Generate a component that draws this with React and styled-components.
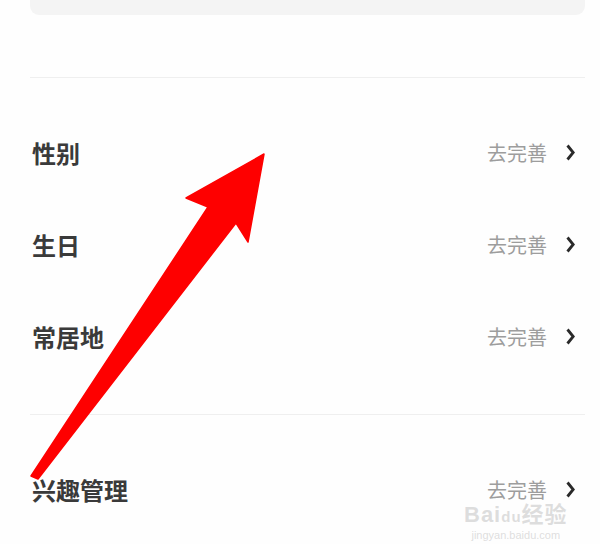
import React from 'react';
import styled, { createGlobalStyle } from 'styled-components';

// 页面的基础样式
const GlobalStyle = createGlobalStyle`
    body {
        margin: 0;
        background: #fefefe;
        font-family: "Noto Sans CJK SC", "Noto Sans", sans-serif;
    }
`;

const groups = [
    ['性别', '生日', '常居地'],
    ['兴趣管理'],
];

const Chevron = () => (
    <svg width="9" height="17" viewBox="0 0 9 17">
        <polyline points="1.5,1.5 7.2,8.5 1.5,15.5" fill="none" stroke="#2a2a2a" strokeWidth="2.8" />
    </svg>
);

const App = () => {
    return (
        <Page>
            <GlobalStyle />
            <TopCard />
            {groups.map((group, i) => (
                <Section key={i} last={i === groups.length - 1}>
                    {group.map((label) => (
                        <Row key={label}>
                            <Label>{label}</Label>
                            <Action>
                                <Hint>去完善</Hint>
                                <Chevron />
                            </Action>
                        </Row>
                    ))}
                </Section>
            ))}

            {/* 截图上画的红色箭头 */}
            <Arrow viewBox="0 0 600 544" width="600" height="544">
                <polygon
                    points="31,476 208,207 186,198 264,154 248,242 236,223 38,479"
                    fill="#fe0000"
                    stroke="#fe0000"
                    strokeWidth="1.5"
                    strokeLinejoin="round"
                />
            </Arrow>

            <Watermark>
                <Brand>Bai<Paw>du</Paw>经验</Brand>
                <Site>jingyan.baidu.com</Site>
            </Watermark>
        </Page>
    );
};

const Page = styled.div`
    position: relative;
    width: 600px;
    height: 544px;
    overflow: hidden;
    padding: 0 15px 0 30px;
    box-sizing: border-box;
`;

const TopCard = styled.div`
    height: 15px;
    background: #f4f4f4;
    border-radius: 0 0 9px 9px;
    margin-bottom: 62px;
`;

const Section = styled.div`
    border-top: 1px solid #efefef;
    padding: 31px 0 ${(p) => (p.last ? '31px' : '29px')};
`;

const Row = styled.div`
    height: 92px;
    box-sizing: border-box;
    padding: 0 10px 6px 2px;
    display: flex;
    align-items: center;
    justify-content: space-between;
`;

const Label = styled.span`
    font-size: 24px;
    font-weight: 700;
    color: #3a3a3a;
`;

const Action = styled.div`
    display: flex;
    align-items: center;
    gap: 19px;
`;

const Hint = styled.span`
    font-size: 20px;
    color: #9d9d9d;
`;

const Arrow = styled.svg`
    position: absolute;
    left: 0;
    top: 0;
    pointer-events: none;
`;

const Watermark = styled.div`
    position: absolute;
    left: 464px;
    top: 504px;
    display: flex;
    flex-direction: column;
    align-items: center;
    color: rgba(200, 200, 200, 0.6);
    font-family: "Liberation Sans", "Noto Sans CJK SC", sans-serif;
    line-height: 1;
    pointer-events: none;
`;

const Brand = styled.div`
    font-size: 22px;
    font-weight: 700;
    letter-spacing: 1px;
`;

const Paw = styled.span`
    font-size: 15px;
`;

const Site = styled.div`
    font-size: 11px;
    margin-top: 4px;
`;

export default App;
